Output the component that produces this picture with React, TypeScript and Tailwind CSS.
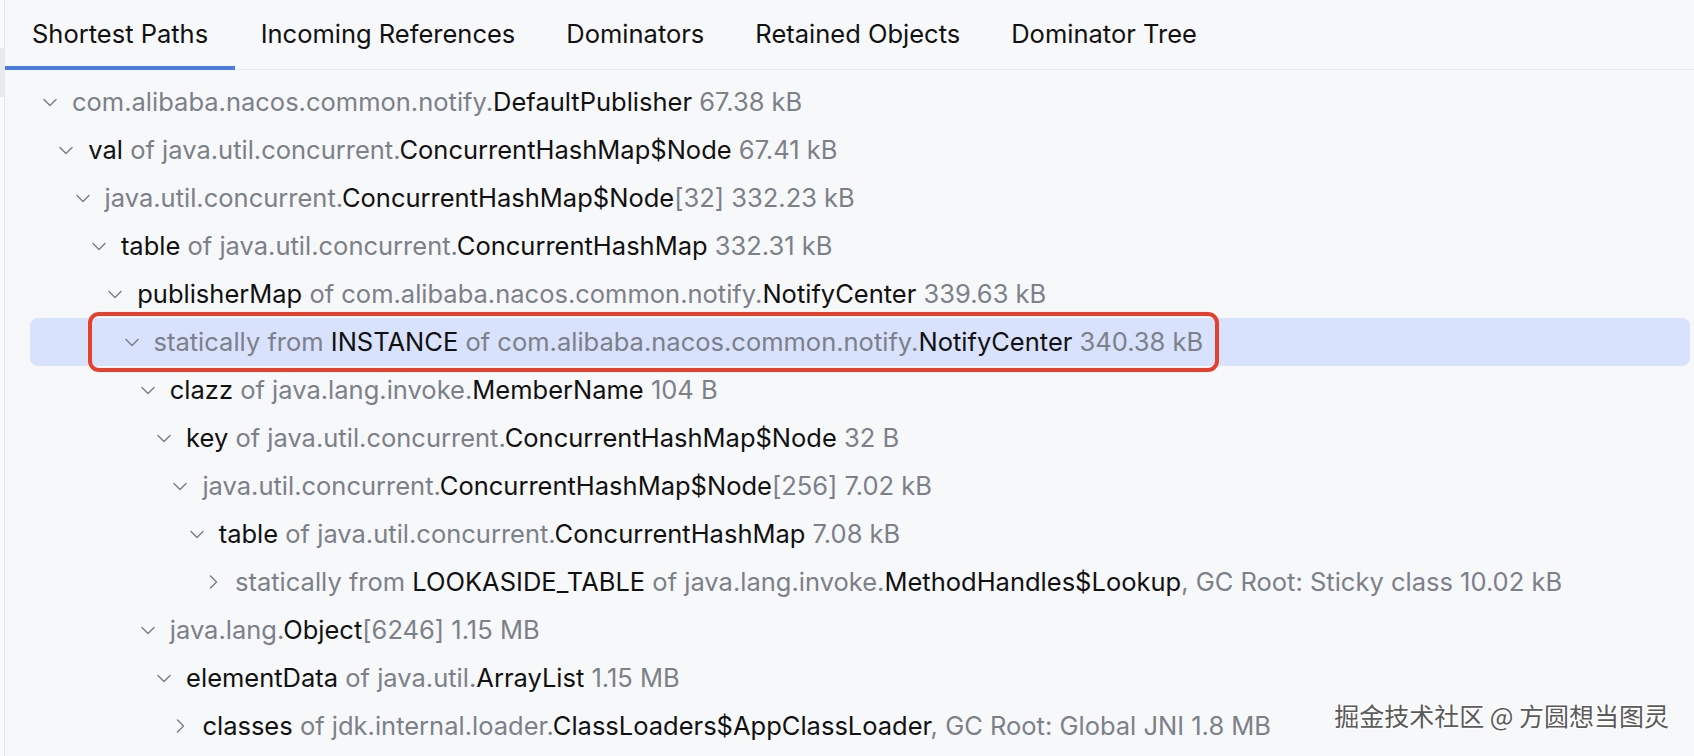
import React from "react"

type Part = [string, boolean] // [text, dark]

type Row = {
  level: number
  open: boolean
  parts: Part[]
  selected?: boolean
}

const g = (t: string): Part => [t, false]
const d = (t: string): Part => [t, true]

const rows: Row[] = [
  { level: 0, open: true, parts: [g("com.alibaba.nacos.common.notify."), d("DefaultPublisher"), g(" 67.38 kB")] },
  { level: 1, open: true, parts: [d("val"), g(" of java.util.concurrent."), d("ConcurrentHashMap$Node"), g(" 67.41 kB")] },
  { level: 2, open: true, parts: [g("java.util.concurrent."), d("ConcurrentHashMap$Node"), g("[32] 332.23 kB")] },
  { level: 3, open: true, parts: [d("table"), g(" of java.util.concurrent."), d("ConcurrentHashMap"), g(" 332.31 kB")] },
  { level: 4, open: true, parts: [d("publisherMap"), g(" of com.alibaba.nacos.common.notify."), d("NotifyCenter"), g(" 339.63 kB")] },
  {
    level: 5,
    open: true,
    selected: true,
    parts: [g("statically from "), d("INSTANCE"), g(" of com.alibaba.nacos.common.notify."), d("NotifyCenter"), g(" 340.38 kB")],
  },
  { level: 6, open: true, parts: [d("clazz"), g(" of java.lang.invoke."), d("MemberName"), g(" 104 B")] },
  { level: 7, open: true, parts: [d("key"), g(" of java.util.concurrent."), d("ConcurrentHashMap$Node"), g(" 32 B")] },
  { level: 8, open: true, parts: [g("java.util.concurrent."), d("ConcurrentHashMap$Node"), g("[256] 7.02 kB")] },
  { level: 9, open: true, parts: [d("table"), g(" of java.util.concurrent."), d("ConcurrentHashMap"), g(" 7.08 kB")] },
  {
    level: 10,
    open: false,
    parts: [g("statically from "), d("LOOKASIDE_TABLE"), g(" of java.lang.invoke."), d("MethodHandles$Lookup"), g(", GC Root: Sticky class 10.02 kB")],
  },
  { level: 6, open: true, parts: [g("java.lang."), d("Object"), g("[6246] 1.15 MB")] },
  { level: 7, open: true, parts: [d("elementData"), g(" of java.util."), d("ArrayList"), g(" 1.15 MB")] },
  {
    level: 8,
    open: false,
    parts: [d("classes"), g(" of jdk.internal.loader."), d("ClassLoaders$AppClassLoader"), g(", GC Root: Global JNI 1.8 MB")],
  },
]

const tabs = ["Shortest Paths", "Incoming References", "Dominators", "Retained Objects", "Dominator Tree"]

function Chevron({ open }: { open: boolean }) {
  return (
    <svg width="24" height="24" viewBox="0 0 24 24" className="shrink-0 text-[#7b7f87]">
      {open ? (
        <path d="M6 9.5 12 15.5l6-6" fill="none" stroke="currentColor" strokeWidth="1.5" strokeLinecap="round" strokeLinejoin="round" />
      ) : (
        <path d="M9.5 6 15.5 12l-6 6" fill="none" stroke="currentColor" strokeWidth="1.5" strokeLinecap="round" strokeLinejoin="round" />
      )}
    </svg>
  )
}

export default function App() {
  return (
    <div className="relative flex h-[756px] w-[1694px] overflow-hidden bg-[#f7f8fa] font-['Inter','Liberation_Sans',sans-serif]">
      {/* left edge of neighbouring panel */}
      <div className="flex w-[5px] shrink-0 flex-col border-r border-[#e4e6ea] bg-[#f9fafb]">
        <div className="h-[48px]" />
        <div className="h-[49px] bg-[#e9eaed]" />
      </div>

      <div className="flex min-w-0 flex-1 flex-col">
        {/* Tabs */}
        <div className="flex h-[70px] shrink-0 items-stretch border-b border-[#e6e8eb]">
          {tabs.map((t, i) => (
            <div
              key={t}
              className={
                i === 0
                  ? "relative flex items-center px-[27px] text-[25.5px] text-[#111]"
                  : "relative flex items-center px-[25.5px] text-[25.5px] text-[#111]"
              }
            >
              {t}
              {i === 0 && <div className="absolute bottom-[-1px] left-0 right-0 h-[4px] bg-[#4a7be0]" />}
            </div>
          ))}
        </div>

        {/* Tree */}
        <div className="flex flex-col pt-[8px] pl-[25px] pr-[4px]">
          {rows.map((r, i) => (
            <div
              key={i}
              className={
                r.selected
                  ? "relative flex h-[48px] items-center rounded-[8px] bg-[#d8e2fc] text-[25.5px] whitespace-nowrap"
                  : "relative flex h-[48px] items-center text-[25.5px] whitespace-nowrap"
              }
              style={{ paddingLeft: 8 + r.level * 16.3 }}
            >
              <Chevron open={r.open} />
              <span className="ml-[10px]">
                {r.parts.map(([t, dark], j) => (
                  <span key={j} className={dark ? "text-[#111]" : "text-[#7c8089]"}>
                    {t}
                  </span>
                ))}
              </span>
              {r.selected && (
                <div className="pointer-events-none absolute left-[58px] top-[-6px] h-[60px] w-[1131px] rounded-[11px] border-[4px] border-[#e5402e]" />
              )}
            </div>
          ))}
        </div>
      </div>

      {/* watermark */}
      <div className="absolute bottom-[22px] right-[25px] font-['Noto_Sans_CJK_SC',sans-serif] text-[25px] text-[#5a5a5a] [text-shadow:1px_1px_0_#fff,-1px_-1px_0_#fff,1px_-1px_0_#fff,-1px_1px_0_#fff]">
        掘金技术社区 @ 方圆想当图灵
      </div>
    </div>
  )
}
